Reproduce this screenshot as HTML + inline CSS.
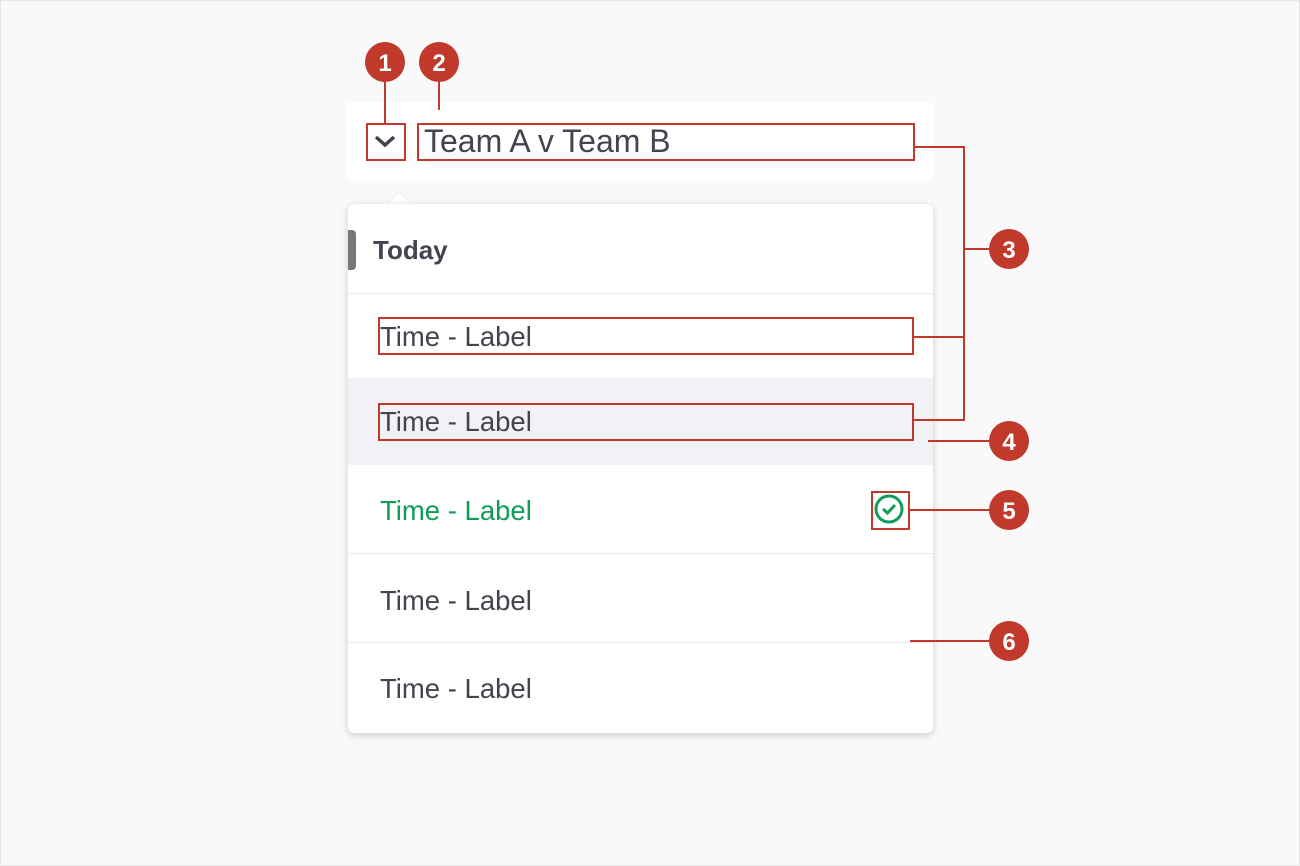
<!DOCTYPE html>
<html><head><style>
body{margin:0;width:1300px;height:866px;background:#f9f9f9;font-family:"Liberation Sans",sans-serif;position:relative;overflow:hidden}
.frame{position:absolute;left:0;top:0;width:1298px;height:864px;border:1px solid #e6e6e6}
.hdr{position:absolute;left:346px;top:102px;width:587px;height:79px;background:#fff;border-radius:4px}
.panel{position:absolute;left:348px;top:204px;width:585px;height:529px;background:#fff;border-radius:6px;box-shadow:0 2px 8px rgba(0,0,0,.18);overflow:hidden}
.caret{position:absolute;left:391px;top:196px;width:16px;height:16px;background:#fff;transform:rotate(45deg);box-shadow:-1px -1px 2px rgba(0,0,0,.05)}
.row{position:absolute;left:0;width:585px;border-bottom:1px solid #ebebeb;font-size:27.5px;color:#44444f}
.row span{position:absolute;left:32px}
</style></head><body>
<div class="frame"></div>
<div class="hdr">
<svg style="position:absolute;left:26px;top:30px" width="26" height="20"><path d="M4 5 L13 13 L22 5" fill="none" stroke="#44444f" stroke-width="3.5"/></svg>
<div style="position:absolute;left:78px;top:21px;font-size:32px;color:#44444f">Team A v Team B</div>
</div>
<div class="caret"></div>
<div class="panel">
<div class="row" style="top:0;height:89px"><div style="position:absolute;left:0;top:26px;width:8px;height:40px;background:#77777f;border-radius:0 4px 4px 0"></div><span style="top:31px;left:25px;font-weight:bold;font-size:26px">Today</span></div>
<div class="row" style="top:89px;height:85px"><span style="top:28px">Time - Label</span></div>
<div class="row" style="top:174px;height:87px;background:#f2f2f6;border:none"><span style="top:28px">Time - Label</span></div>
<div class="row" style="top:261px;height:88px;color:#0f9d58"><span style="top:30px">Time - Label</span>
<svg style="position:absolute;left:526px;top:29px" width="30" height="30"><circle cx="15" cy="15" r="13" fill="none" stroke="#0f9d58" stroke-width="3"/><path d="M9 15 L13.5 19 L21 11" fill="none" stroke="#0f9d58" stroke-width="3"/></svg></div>
<div class="row" style="top:349px;height:89px"><span style="top:32px">Time - Label</span></div>
<div class="row" style="top:438px;height:91px;border:none"><span style="top:31px">Time - Label</span></div>
</div>
<svg style="position:absolute;left:0;top:0" width="1300" height="866">
<g fill="none" stroke="#c0392b" stroke-width="2">
<rect x="367" y="124" width="38" height="36"/>
<rect x="418" y="124" width="496" height="36"/>
<rect x="379" y="318" width="534" height="36"/>
<rect x="379" y="404" width="534" height="36"/>
<rect x="872" y="492" width="37" height="37"/>
<path d="M385 82V124M439 82V110M914 147H964V420H913M913 337H964M964 249H990M928 441H990M909 510H990M910 641H990"/>
</g>
<g fill="#c0392b"><circle cx="385" cy="62" r="20"/><circle cx="439" cy="62" r="20"/><circle cx="1009" cy="249" r="20"/><circle cx="1009" cy="441" r="20"/><circle cx="1009" cy="510" r="20"/><circle cx="1009" cy="641" r="20"/></g>
<g fill="#fff" font-family="Liberation Sans" font-weight="bold" font-size="24" text-anchor="middle">
<text x="385" y="71">1</text><text x="439" y="71">2</text><text x="1009" y="258">3</text><text x="1009" y="450">4</text><text x="1009" y="519">5</text><text x="1009" y="650">6</text></g>
</svg>
</body></html>
